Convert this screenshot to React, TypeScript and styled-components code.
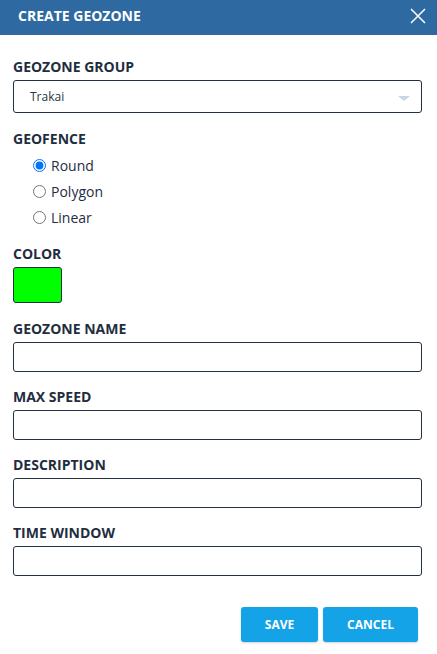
import React from "react";
import styled, { createGlobalStyle } from "styled-components";

const GlobalStyle = createGlobalStyle`
  html, body {
    margin: 0;
    padding: 0;
    background: #ffffff;
    font-family: "Open Sans", "Liberation Sans", sans-serif;
  }
  * { box-sizing: border-box; }
`;

const Dialog = styled.div`
  width: 437px;
  height: 654px;
  background: #fff;
  display: flex;
  flex-direction: column;
`;

const Header = styled.div`
  height: 35px;
  background: #2e69a2;
  display: flex;
  align-items: center;
  justify-content: space-between;
  padding: 0 11px 3px 18px;
`;

const Title = styled.h1`
  margin: 0;
  color: #fff;
  font-size: 14px;
  font-weight: 700;
  line-height: 18px;
`;

const CloseButton = styled.button`
  width: 17px;
  height: 17px;
  padding: 0;
  border: none;
  background: transparent;
  display: flex;
  align-items: center;
  justify-content: center;
  cursor: pointer;
`;

const Body = styled.div`
  padding: 23px 15px 0 13px;
  display: flex;
  flex-direction: column;
`;

const Field = styled.div<{ $gap?: number }>`
  display: flex;
  flex-direction: column;
  margin-bottom: ${(p) => p.$gap ?? 16}px;
`;

const Label = styled.label`
  display: block;
  color: #1f2e3f;
  font-size: 14px;
  font-weight: 700;
  line-height: 18px;
  margin-bottom: 4px;
`;

const TextInput = styled.input`
  width: 100%;
  height: 30px;
  border: 1px solid #22303f;
  border-radius: 3px;
  padding: 0 10px;
  font-family: inherit;
  font-size: 12px;
  outline: none;
`;

const SelectBox = styled.div`
  position: relative;
  height: 33px;
  border: 1px solid #22303f;
  border-radius: 3px;
  display: flex;
  align-items: center;
  padding-left: 16px;
  font-size: 12px;
  color: #2b3440;
`;

const Caret = styled.span`
  position: absolute;
  right: 11px;
  top: 15px;
  width: 0;
  height: 0;
  border-left: 6px solid transparent;
  border-right: 6px solid transparent;
  border-top: 5px solid #c7d5e4;
`;

const RadioGroup = styled.div`
  display: flex;
  flex-direction: column;
  padding-left: 20px;
`;

const RadioRow = styled.label`
  display: flex;
  align-items: center;
  gap: 5px;
  height: 26px;
  font-size: 14px;
  color: #1f2e3f;
  cursor: pointer;

  input {
    margin: 0;
    width: 13px;
    height: 13px;
  }
`;

const Swatch = styled.div<{ $color: string }>`
  width: 49px;
  height: 36px;
  border: 1px solid #22303f;
  border-radius: 3px;
  background: ${(p) => p.$color};
`;

const Footer = styled.div`
  display: flex;
  justify-content: flex-end;
  gap: 5px;
  padding: 31px 19px 0 0;
`;

const ActionButton = styled.button<{ $width: number }>`
  width: ${(p) => p.$width}px;
  height: 35px;
  border: none;
  border-radius: 3px;
  background: #13a3e6;
  color: #fff;
  font-family: inherit;
  font-size: 12px;
  font-weight: 700;
  box-shadow: 0 1px 2px rgba(0, 0, 0, 0.18);
  cursor: pointer;
`;

const fields = ["GEOZONE NAME", "MAX SPEED", "DESCRIPTION", "TIME WINDOW"];
const fences = ["Round", "Polygon", "Linear"];

export default function App() {
  const [fence, setFence] = React.useState("Round");

  return (
    <>
      <GlobalStyle />
      <Dialog>
        <Header>
          <Title>CREATE GEOZONE</Title>
          <CloseButton aria-label="Close">
            <svg width="16" height="16" viewBox="0 0 16 16">
              <path d="M1 1 L15 15 M15 1 L1 15" stroke="#fff" strokeWidth="1.5" />
            </svg>
          </CloseButton>
        </Header>
        <Body>
          <Field $gap={17}>
            <Label>GEOZONE GROUP</Label>
            <SelectBox>
              Trakai
              <Caret />
            </SelectBox>
          </Field>

          <Field $gap={15}>
            <Label>GEOFENCE</Label>
            <RadioGroup>
              {fences.map((f) => (
                <RadioRow key={f}>
                  <input
                    type="radio"
                    name="fence"
                    checked={fence === f}
                    onChange={() => setFence(f)}
                  />
                  {f}
                </RadioRow>
              ))}
            </RadioGroup>
          </Field>

          <Field $gap={17}>
            <Label>COLOR</Label>
            <Swatch $color="#00ff00" />
          </Field>

          {fields.map((f, i) => (
            <Field key={f} $gap={i === fields.length - 1 ? 0 : 16}>
              <Label>{f}</Label>
              <TextInput />
            </Field>
          ))}
        </Body>
        <Footer>
          <ActionButton $width={77}>SAVE</ActionButton>
          <ActionButton $width={95}>CANCEL</ActionButton>
        </Footer>
      </Dialog>
    </>
  );
}
